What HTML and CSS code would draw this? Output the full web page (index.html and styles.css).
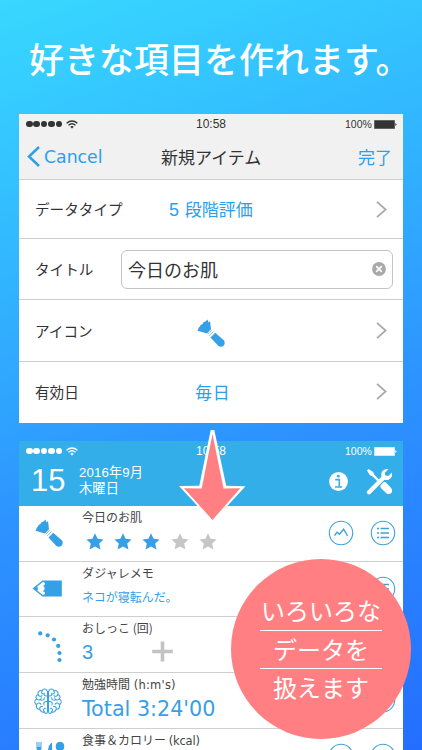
FILE: index.html
```
<!DOCTYPE html>
<html lang="ja">
<head>
<meta charset="utf-8">
<title>新規アイテム</title>
<link rel="stylesheet" href="styles.css">
</head>
<body>
<svg class="defs" width="0" height="0">
  <defs>
    <symbol id="wifi" viewBox="0 0 12 9"><path d="M.6 3.2Q6-1.4 11.4 3.2M2.5 5.2Q6 2.3 9.5 5.2" fill="none" stroke="currentColor" stroke-width="1.4"/><path d="M4.2 6.7Q6 5.3 7.8 6.7L6 8.6z" fill="currentColor"/></symbol>
    <symbol id="battery" viewBox="0 0 23 9"><rect x=".5" y=".5" width="20" height="8" fill="currentColor" stroke="currentColor" stroke-opacity=".5"/><path d="M21.3 3v3l1.5-1.5z" fill="currentColor"/></symbol>
    <symbol id="chevron" viewBox="0 0 11 17"><path d="M1 .8l8.6 7.7L1 16.2" fill="none" stroke="#a9a9a9" stroke-width="1.8"/></symbol>
    <symbol id="brush" viewBox="0 0 28 28"><path d="M.5 11.8L2 8.300 3 7.500 3.600 6 5.500 5 6.500 3.200 8.400 2.600 10.600.5 11.300 3.600 13 1.900 14 10.300 9.900 14.400z" fill="currentColor"/><path d="M10.500 14.900L14.500 10.900 18 13.900 13.500 18.400z" fill="#fff"/><path d="M10.700 15.200l3.800-3.900M12.300 16.800l4.200-4.300" stroke="currentColor" stroke-width=".7"/><path d="M13.500 18.500L18.200 13.800 26.800 21.300Q28.600 24 26.800 26.500 24.200 28.800 21.400 27z" fill="currentColor"/></symbol>
    <symbol id="star" viewBox="0 0 18 17"><path d="M9 .3L11.600 5.700 17.600 6.400 13.200 10.400 14.400 16.500 9 13.500 3.600 16.500 4.800 10.400.4 6.400 6.400 5.700z" fill="currentColor"/></symbol>
    <symbol id="chart" viewBox="0 0 26 26"><circle cx="13" cy="13" r="11.700" fill="none" stroke="currentColor" stroke-width="1.100"/><path d="M6.500 15.500L9 12.200 11.400 14.300 15.600 9.200 19.600 16" fill="none" stroke="currentColor" stroke-width="1.400"/></symbol>
    <symbol id="list" viewBox="0 0 26 26"><circle cx="13" cy="13" r="11.700" fill="none" stroke="currentColor" stroke-width="1.100"/><path d="M7 8.500h2M7 13h2M7 17.500h2M10.500 8.500h8.500M10.500 13h8.500M10.500 17.500h8.500" stroke="currentColor" stroke-width="1.500"/></symbol>
  </defs>
</svg>
<main class="poster">
  <h1 class="headline">好きな項目を作れます。</h1>

  <section class="form">
    <header class="form-head">
      <div class="status">
        <span class="signal"><i></i><i></i><i></i><i></i><i></i></span><svg class="wifi"><use href="#wifi"/></svg>
        <span class="clock">10:58</span>
        <span class="charge">100%</span><svg class="battery"><use href="#battery"/></svg>
      </div>
      <nav class="nav">
        <span class="cancel"><svg width="13" height="21" viewBox="0 0 13 21"><path d="M12 1L2 10.500 12 20" fill="none" stroke="currentColor" stroke-width="2.500"/></svg><b>Cancel</b></span>
        <span class="title">新規アイテム</span>
        <span class="done">完了</span>
      </nav>
    </header>
    <div class="field">
      <span class="label">データタイプ</span><span class="value type"><span class="num">5</span> 段階評価</span><svg class="chevron"><use href="#chevron"/></svg>
    </div>
    <div class="field tall">
      <span class="label">タイトル</span>
      <span class="input"><span>今日のお肌</span><svg width="14" height="14" viewBox="0 0 14 14"><circle cx="7" cy="7" r="6.900" fill="#a9a9a9"/><path d="M4.200 4.200l5.600 5.600M9.800 4.200L4.200 9.800" stroke="#fff" stroke-width="1.700"/></svg></span>
    </div>
    <div class="field icon-field">
      <span class="label">アイコン</span><svg class="brush"><use href="#brush"/></svg><svg class="chevron"><use href="#chevron"/></svg>
    </div>
    <div class="field last">
      <span class="label">有効日</span><span class="value day">毎日</span><svg class="chevron"><use href="#chevron"/></svg>
    </div>
  </section>

  <section class="log">
    <header class="log-head">
      <div class="status">
        <span class="signal"><i></i><i></i><i></i><i></i><i></i></span><svg class="wifi"><use href="#wifi"/></svg>
        <span class="clock">10:58</span>
        <span class="charge">100%</span><svg class="battery"><use href="#battery"/></svg>
      </div>
      <div class="date">
        <span class="day-number">15</span>
        <div class="month"><div>2016年9月</div><div>木曜日</div></div>
        <svg class="info" width="19" height="19" viewBox="0 0 19 19"><circle cx="9.500" cy="9.500" r="9.400" fill="#fff"/><circle cx="9.300" cy="4.200" r="1.400" fill="#34aee9"/><path d="M6.300 7.600h4v7.200M6 15h7.200" fill="none" stroke="#34aee9" stroke-width="1.600"/></svg>
        <svg class="tools" width="27" height="27" viewBox="0 0 27 27"><path d="M1 2.600L2.600 1 7.200 4 8.300 6.700 14 12.500 12.400 14.200 6.700 8.400 4 7.300z" fill="#fff"/><path d="M14.500 17.500L17.500 14.300Q19.300 13.500 20.600 15.200L25.300 20.200Q27 23 25.300 25 22.800 27 20.300 25.200L15.400 20.500Q13.800 19 14.500 17.500z" fill="#fff"/><path d="M3 24.300L18 9.300" stroke="#fff" stroke-width="4.200" stroke-linecap="round"/><path d="M22.500 1.200Q18.500 0 16 3.400 14.500 6.100 15.600 9L18.500 11.800Q22 12.700 24.700 10.200 26.800 7.800 25.900 4.600L22.200 8.100 19.300 7.600 18.700 4.800z" fill="#fff"/></svg>
      </div>
    </header>
    <article class="row">
      <svg class="brush pic"><use href="#brush"/></svg>
      <div class="info-col"><h2>今日のお肌</h2><div class="stars"><svg><use href="#star"/></svg><svg><use href="#star"/></svg><svg><use href="#star"/></svg><svg class="off"><use href="#star"/></svg><svg class="off"><use href="#star"/></svg></div></div>
      <div class="actions"><svg><use href="#chart"/></svg><svg><use href="#list"/></svg></div>
    </article>
    <article class="row">
      <svg class="pencil pic" width="30" height="17" viewBox="0 0 30 17"><path d="M10.500.5H29.800V16.500H10.500L.5 8.500z" fill="currentColor"/><path d="M10.500 2.200Q13 1.700 13 4 12.700 5.800 11 5.800 14.400 8.500 11 11.200 13 11.400 13 13.500 12.600 15.300 10.400 14.700L5.200 10.500Q6.600 8.500 5.200 6.500z" fill="#fff"/></svg>
      <div class="info-col"><h2 class="memo-title">ダジャレメモ</h2><p class="memo">ネコが寝転んだ。</p></div>
      <div class="actions"><svg><use href="#chart"/></svg><svg><use href="#list"/></svg></div>
    </article>
    <article class="row">
      <svg class="dots pic" width="28" height="33" viewBox="0 0 28 33" fill="currentColor"><circle cx="3.200" cy="3.400" r="2.100"/><circle cx="10.700" cy="5.300" r="2.100"/><circle cx="17" cy="9.500" r="2.100"/><circle cx="21.200" cy="15.900" r="2.100"/><circle cx="22.500" cy="23" r="2.100"/><circle cx="22.500" cy="30" r="2.100"/></svg>
      <div class="info-col"><h2 class="count-title">おしっこ (回)</h2><div class="count">3<svg width="21" height="21" viewBox="0 0 21 21"><path d="M10.500.5v20M.2 10.500h20.600" stroke="#c3c3c3" stroke-width="3.600"/></svg></div></div>
      <div class="actions"><svg><use href="#chart"/></svg><svg><use href="#list"/></svg></div>
    </article>
    <article class="row">
      <svg class="brain pic" width="28" height="27" viewBox="0 0 28 27" fill="none" stroke="currentColor" stroke-width="1.050" stroke-linecap="round"><path id="half" d="M13.400 3.200C12.500.4 8.900.2 8.200 2.800 5.500 1.900 3.400 3.800 4.100 6.400 1.800 7.200 1.500 9.500 2.600 10.900.2 12.300.2 15.400 2.500 16.700 1.600 19.500 3.500 21.400 5.800 21.200 6.200 23.800 8.700 24.800 10.300 23.700 11.400 26.400 13.500 26 13.500 23.500V3.200M13.400 8C11 8.400 9.700 7 10.100 5M8.200 2.800C7 4.200 7.600 5.600 9 6M4.200 6.500C4.800 8.600 7 8.700 8 7.600M2.700 11C5 13 7.500 11.500 7.200 9.700M7 12.100C8.500 12.500 10.400 11.800 10.500 9.800M2.600 16.600C3.700 14.500 6.200 14.800 6.800 16.200M13.400 13.600C10.700 13 9.100 14.600 10 16.900M5.800 21C5.500 19.400 6.700 18 8.500 18.600M10.300 23.600C8.800 22 9.700 20 11.700 20.200"/><use href="#half" transform="matrix(-1 0 0 1 28 0)"/></svg>
      <div class="info-col"><h2 class="time-title">勉強時間<span class="latin"> (h:m's)</span></h2><p class="total">Total 3:24'00</p></div>
      <div class="actions"><svg><use href="#chart"/></svg><svg><use href="#list"/></svg></div>
    </article>
    <article class="row">
      <svg class="meal pic" width="30" height="28" viewBox="0 0 30 28" fill="currentColor"><path d="M1.500 0h1v5h1V0h1v5h1V0h1v6Q6.400 8 5 8.300V25H3V8.300Q1.500 8 1.500 6zM16 1Q12.500 4 13 12h2v14h2V1z"/><ellipse cx="25" cy="4.500" rx="4.300" ry="4.900"/><path d="M24 8h2v18h-2z"/></svg>
      <div class="info-col"><h2 class="meal-title">食事＆カロリー <span class="latin">(kcal)</span></h2></div>
      <div class="actions"><svg><use href="#chart"/></svg><svg><use href="#list"/></svg></div>
    </article>
  </section>

  <svg class="arrow" width="70" height="96" viewBox="0 0 70 96"><path d="M32.700 4H36.300L48.200 59.800 67.500 60.300 34.500 96 1 60 21.300 59.800z" fill="#fff"/><path d="M34.500 8L23.700 62.500 6 62.300 34.500 94 62.300 62.300 45.500 62.500z" fill="#ff7f82"/></svg>
  <aside class="bubble"><span class="first">いろいろな</span><span class="second">データを</span><span class="third">扱えます</span></aside>
</main>
</body>
</html>
```

FILE: styles.css
```
* { box-sizing: border-box; }
body, h1, h2, p { margin: 0; font-weight: 400; }
svg { display: block; flex: none; }
.defs { position: absolute; }
.poster {
  position: relative;
  width: 422px;
  height: 750px;
  overflow: hidden;
  padding: 34px 19px 0;
  background: linear-gradient(160deg, #38d8ff 0%, #32baff 27%, #2d93ff 59%, #246eff 100%);
  font-family: "Noto Sans CJK JP", sans-serif;
  color: #333;
}
.headline {
  height: 80px;
  margin: 0 -19px 0 10px;
  font-size: 35px;
  font-weight: 500;
  line-height: 48px;
  white-space: nowrap;
  color: #fff;
}
.form { width: 384px; height: 309px; background: #fff; }
.form-head { height: 66px; background: #f1f1f1; border-bottom: 1px solid #cfcfcf; }
.status {
  display: grid;
  grid-template-columns: 40px 12px 1fr 29px 22px;
  align-items: center;
  height: 20px;
  padding: 0 7px;
  font-family: "Liberation Sans", sans-serif;
}
.signal { display: flex; gap: .800px; }
.signal i { width: 6.600px; height: 6.600px; border-radius: 50%; background: currentColor; }
.wifi { width: 12px; height: 9px; }
.battery { width: 23px; height: 9px; }
.clock { padding-left: 118px; font-size: 12px; line-height: 20px; }
.charge { font-size: 10.500px; line-height: 20px; }
.nav {
  display: grid;
  grid-template-columns: 134px 1fr 39px;
  align-items: center;
  height: 45px;
  padding: 0 6px 0 8px;
}
.cancel { display: flex; align-items: center; gap: 4px; color: #2aa0ec; }
.cancel b { font: 17.300px/22px "DejaVu Sans", sans-serif; }
.title { font-size: 17px; line-height: 24px; }
.done { font-size: 17px; line-height: 24px; color: #2aa0ec; }
.field {
  display: grid;
  grid-template-columns: 133px 1fr 15px;
  align-items: center;
  height: 59px;
  padding: 0 12px 0 16px;
  border-bottom: 1px solid #cecece;
}
.tall { height: 61px; grid-template-columns: 86px 272px; padding-right: 10px; }
.icon-field { height: 62px; grid-template-columns: 162px 1fr 15px; }
.icon-field .brush { margin-top: 4px; }
.last { height: 59px; border: 0; grid-template-columns: 160px 1fr 15px; }
.label { font-size: 14.600px; line-height: 20px; }
.value { font-size: 17px; line-height: 24px; color: #2aa0ec; }
.num { margin: 0 2px 0 1px; font: 18px/24px "Liberation Sans", sans-serif; }
.day { letter-spacing: .8px; }
.chevron { width: 11px; height: 17px; }
.input {
  display: flex;
  align-items: center;
  justify-content: space-between;
  height: 39px;
  padding: 0 6px 0 6px;
  border: 1px solid #c4c4c4;
  border-radius: 6px;
  font-size: 18px;
  line-height: 26px;
}
.brush { width: 28px; height: 28px; color: #36a0e6; }
.log { width: 384px; margin-top: 18px; background: #fff; }
.log-head { height: 65px; color: #fff; background: #34aee9; }
.date {
  display: grid;
  grid-template-columns: 48px 250px 37px 27px;
  align-items: center;
  height: 40px;
  padding-left: 12px;
}
.day-number { font: 31px/36px "Liberation Sans", sans-serif; }
.month { font: 13.200px/16.500px "Liberation Sans", "Noto Sans CJK JP", sans-serif; letter-spacing: .15px; }
.month div { height: 16.500px; }
.row {
  display: grid;
  grid-template-columns: 63px 1fr 74px;
  height: 55.700px;
  border-bottom: 1.500px solid #cfcfcf;
}
.pic { margin: 13px 0 0 16px; color: #36a0e6; }
.pencil { margin: 18px 0 0 13px; }
.dots { margin: 13px 0 0 18px; }
.brain { margin: 15px 0 0 15px; }
.meal { margin: 13px 0 0 16px; }
.info-col h2 { height: 21px; font-size: 12px; line-height: 21px; white-space: nowrap; color: #444; }
.latin { font-family: "DejaVu Sans", sans-serif; font-size: 11.500px; letter-spacing: -.2px; }
.time-title .latin { letter-spacing: .2px; }
.stars { display: flex; gap: 10.200px; padding: 6px 0 0 4px; color: #36a0e6; }
.stars svg { width: 18px; height: 17px; }
.stars .off { color: #c6c6c6; }
.actions { display: flex; gap: 15.500px; padding-top: 14px; margin-left: -1px; color: #3da0df; }
.actions svg { width: 26px; height: 26px; }
.memo { font-size: 12px; line-height: 28px; color: #36a0e6; }
.count { display: flex; gap: 59px; padding-top: 3px; font: 20px/23px "Liberation Sans", sans-serif; color: #36a0e6; }
.total { font: 20.700px/30px "DejaVu Sans", sans-serif; color: #36a0e6; white-space: nowrap; }
.arrow { position: absolute; left: 178px; top: 426px; }
.bubble {
  position: absolute;
  left: 231px;
  top: 559px;
  display: flex;
  flex-direction: column;
  align-items: center;
  width: 180px;
  height: 180px;
  padding-top: 33px;
  border-radius: 50%;
  background: #ff7f82;
  color: #fff;
  font-size: 24px;
  line-height: 35px;
}
.bubble span { width: 122px; height: 38px; display: flex; justify-content: center; white-space: nowrap; }
.bubble .first { height: 39px; }
.bubble .first, .bubble .second { border-bottom: 1.500px solid #fff; }
```
